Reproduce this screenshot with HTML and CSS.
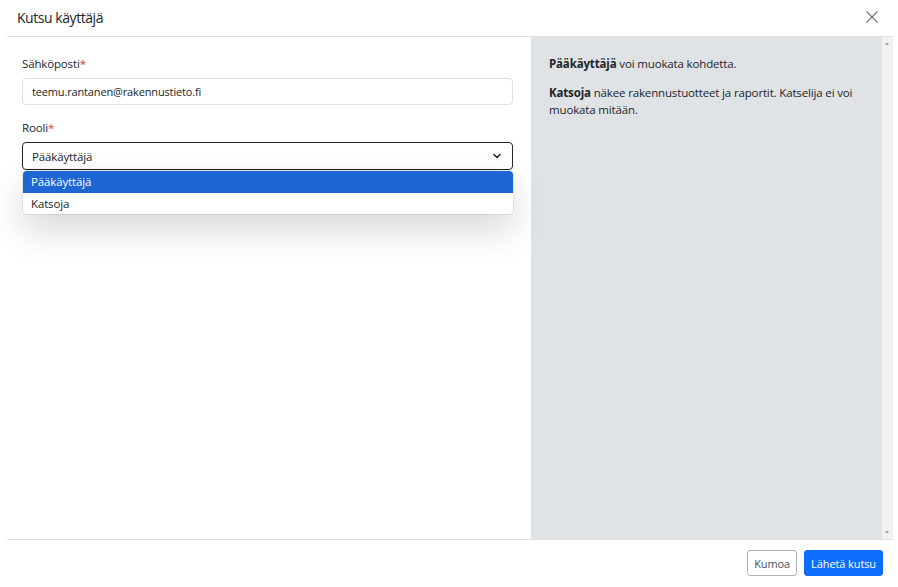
FILE: index.html
```html
<!DOCTYPE html>
<html lang="fi">
<head>
    <meta charset="UTF-8">
    <meta name="viewport" content="width=device-width, initial-scale=1.0">
    <title>Kutsu käyttäjä</title>
    <link rel="stylesheet" href="styles.css">
</head>
<body>
    <div class="modal">
        <div class="modal-header">
            <h1 class="modal-title">Kutsu käyttäjä</h1>
            <button class="btn-close" aria-label="Sulje">
                <svg viewBox="0 0 16 16" width="14" height="14" fill="none" stroke="currentColor" stroke-width="1.3" stroke-linecap="round">
                    <path d="M2 2l12 12M14 2L2 14"></path>
                </svg>
            </button>
        </div>

        <div class="modal-body">
            <div class="form-pane">
                <label class="form-label">Sähköposti<span class="req">*</span></label>
                <div class="form-control">teemu.rantanen@rakennustieto.fi</div>

                <label class="form-label">Rooli<span class="req">*</span></label>
                <div class="select-wrap">
                    <div class="form-select">
                        <span>Pääkäyttäjä</span>
                        <svg viewBox="0 0 16 16" width="10" height="10" fill="none" stroke="#212529" stroke-width="2.4" stroke-linecap="round" stroke-linejoin="round">
                            <path d="M3 5.5l5 5 5-5"></path>
                        </svg>
                    </div>
                    <ul class="select-menu">
                        <li class="option selected">Pääkäyttäjä</li>
                        <li class="option">Katsoja</li>
                    </ul>
                </div>
            </div>

            <div class="info-pane">
                <p><strong>Pääkäyttäjä</strong> voi muokata kohdetta.</p>
                <p><strong>Katsoja</strong> näkee rakennustuotteet ja raportit. Katselija ei voi muokata mitään.</p>
            </div>

            <div class="scrollbar">
                <span class="arrow up"></span>
                <span class="arrow down"></span>
            </div>
        </div>

        <div class="modal-footer">
            <button class="btn btn-outline">Kumoa</button>
            <button class="btn btn-primary">Lähetä kutsu</button>
        </div>
    </div>
</body>
</html>
```

FILE: styles.css
```css
* {
    margin: 0;
    padding: 0;
    box-sizing: border-box;
    font-family: "Open Sans", "Noto Sans", sans-serif;
}

body {
    background: white;
    color: #212529;
    font-size: 11.5px;
    letter-spacing: -0.15px;
}

.modal {
    width: 886px;
    margin-left: 7px;
}

.modal-header {
    height: 37px;
    display: flex;
    align-items: center;
    justify-content: space-between;
    padding: 0 14px 2px 10px;
    border-bottom: 1px solid #dee2e6;
}

.modal-title {
    font-size: 14px;
    font-weight: 400;
    letter-spacing: -0.45px;
}

.btn-close {
    border: none;
    background: none;
    color: #6c757d;
    display: flex;
    cursor: pointer;
}

.modal-body {
    height: 502px;
    display: flex;
}

.form-pane {
    width: 524px;
    padding: 19px 18px 0 15px;
}

.form-label {
    display: block;
    margin-bottom: 7px;
}

.req {
    color: #dc3545;
}

.form-control {
    height: 27px;
    border: 1px solid #dee2e6;
    border-radius: 4px;
    padding: 0 9px;
    display: flex;
    align-items: center;
    margin-bottom: 15px;
    font-size: 11px;
}

.select-wrap {
    position: relative;
}

.form-select {
    height: 28px;
    border: 1.5px solid #212529;
    border-radius: 4px;
    padding: 0 10px 0 9px;
    display: flex;
    align-items: center;
    justify-content: space-between;
}

.select-menu {
    position: absolute;
    top: 29px;
    left: 1px;
    right: 0;
    list-style: none;
    background: white;
    border-radius: 4px;
    overflow: hidden;
    box-shadow: 0 0 0 1px rgba(0, 0, 0, 0.08), 0 16px 36px rgba(0, 0, 0, 0.16);
}

.option {
    height: 21.5px;
    display: flex;
    align-items: center;
    padding: 0 8px;
}

.option.selected {
    background: #1c67d4;
    color: white;
}

.info-pane {
    width: 351px;
    background: #dfe3e6;
    padding: 18px 18px 0 18px;
    line-height: 17px;
}

.info-pane p {
    margin-bottom: 12px;
}

.scrollbar {
    width: 11px;
    background: #f1f1f1;
    position: relative;
}

.arrow {
    position: absolute;
    left: 3px;
    width: 0;
    height: 0;
    border-left: 2.5px solid transparent;
    border-right: 2.5px solid transparent;
}

.arrow.up {
    top: 5px;
    border-bottom: 3px solid #a3a3a3;
}

.arrow.down {
    bottom: 5px;
    border-top: 3px solid #a3a3a3;
}

.modal-footer {
    border-top: 1px solid #dee2e6;
    display: flex;
    justify-content: flex-end;
    gap: 7px;
    padding: 10px 10px 0 0;
}

.btn {
    height: 26px;
    padding: 0 6px;
    border-radius: 3px;
    font-size: 11px;
    letter-spacing: -0.1px;
    cursor: pointer;
}

.btn-outline {
    background: white;
    border: 1px solid #adb5bd;
    color: #495057;
}

.btn-primary {
    background: #0d6efd;
    border: 1px solid #0d6efd;
    color: white;
}
```
